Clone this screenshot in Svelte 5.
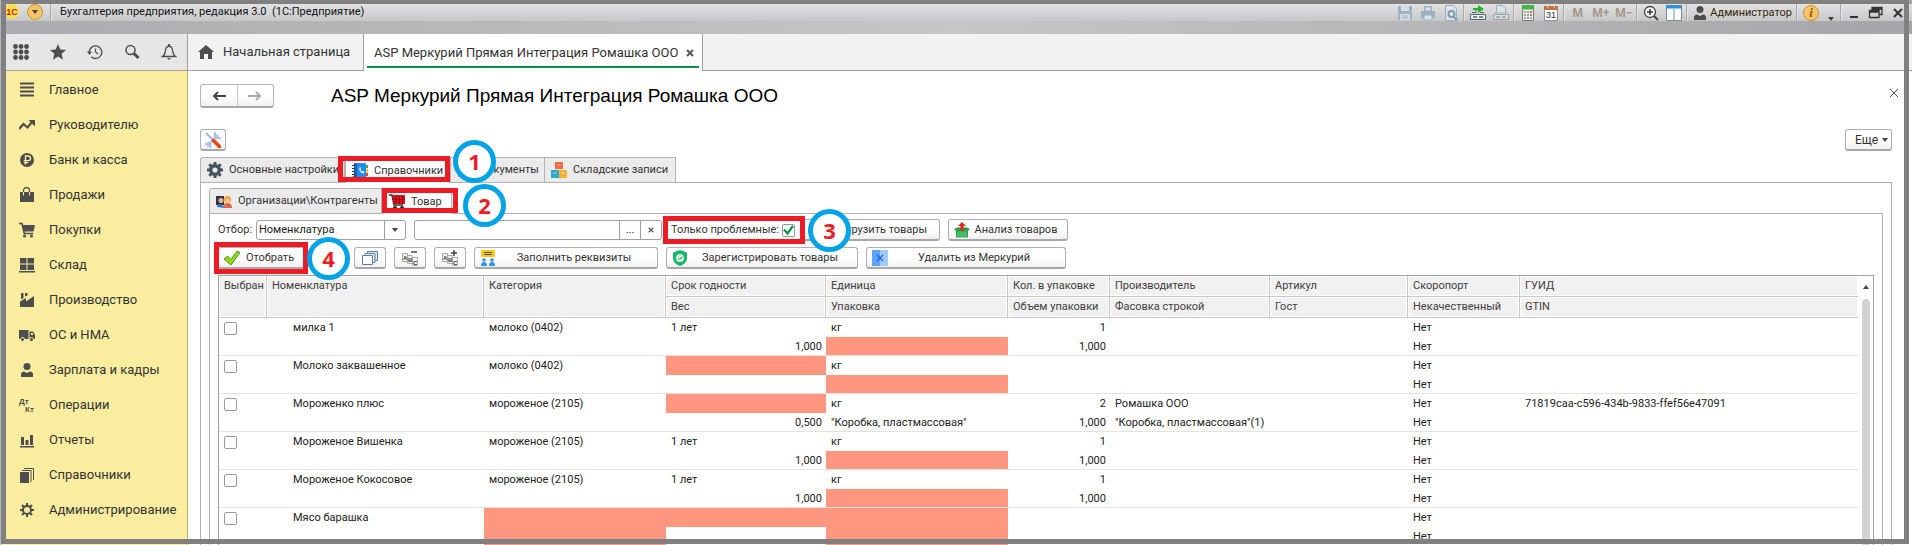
<script lang="ts">
	type Cell = string | null;

	interface Item {
		name: string;
		category: Cell;
		shelfLife: Cell;
		weight: string;
		unit: Cell;
		pack: Cell;
		count: string;
		volume: string;
		maker?: string;
		packing?: string;
		guid?: string;
	}

	const sections = [
		{ icon: 'menu', label: 'Главное' },
		{ icon: 'trend', label: 'Руководителю' },
		{ icon: 'ruble', label: 'Банк и касса' },
		{ icon: 'bag', label: 'Продажи' },
		{ icon: 'cart', label: 'Покупки' },
		{ icon: 'blocks', label: 'Склад' },
		{ icon: 'factory', label: 'Производство' },
		{ icon: 'truck', label: 'ОС и НМА' },
		{ icon: 'person', label: 'Зарплата и кадры' },
		{ icon: 'dtkt', label: 'Операции' },
		{ icon: 'chart', label: 'Отчеты' },
		{ icon: 'books', label: 'Справочники' },
		{ icon: 'gear', label: 'Администрирование' }
	];

	// null marks a required value that is not filled in
	const items: Item[] = [
		{ name: 'милка 1', category: 'молоко (0402)', shelfLife: '1 лет', weight: '1,000', unit: 'кг', pack: null, count: '1', volume: '1,000' },
		{ name: 'Молоко заквашенное', category: 'молоко (0402)', shelfLife: null, weight: '', unit: 'кг', pack: null, count: '', volume: '' },
		{
			name: 'Мороженко плюс',
			category: 'мороженое (2105)',
			shelfLife: null,
			weight: '0,500',
			unit: 'кг',
			pack: '"Коробка, пластмассовая"',
			count: '2',
			volume: '1,000',
			maker: 'Ромашка ООО',
			packing: '"Коробка, пластмассовая"(1)',
			guid: '71819caa-c596-434b-9833-ffef56e47091'
		},
		{ name: 'Мороженое Вишенка', category: 'мороженое (2105)', shelfLife: '1 лет', weight: '1,000', unit: 'кг', pack: null, count: '1', volume: '1,000' },
		{ name: 'Мороженое Кокосовое', category: 'мороженое (2105)', shelfLife: '1 лет', weight: '1,000', unit: 'кг', pack: null, count: '1', volume: '1,000' },
		{ name: 'Мясо барашка', category: null, shelfLife: null, weight: '', unit: null, pack: null, count: '', volume: '' }
	];

	let onlyProblem = $state(true);
	let filterBy = $state('Номенклатура');
	let filterValue = $state('');
</script>

{#snippet icon(name: string)}
	<svg class="icon" viewBox="0 0 16 16" width="16" height="16" aria-hidden="true">
		{#if name === 'menu'}
			<path d="M1 1.500h14M1 5.500h14M1 9.500h14M1 13.500h14" stroke="#4d4d4d" stroke-width="2" />
		{:else if name === 'trend'}
			<path d="M0 12l4.500-5 4 3.500L13 5" fill="none" stroke="#4d4d4d" stroke-width="2.200" />
			<path d="M9.500 3H16v6.500z" fill="#4d4d4d" />
		{:else if name === 'ruble'}
			<circle cx="8" cy="8" r="7" fill="#4d4d4d" />
			<path d="M6.500 12.500V4h2.700a2.300 2.300 0 0 1 0 4.600H4.800M4.800 10.600h4.400" fill="none" stroke="#faeda0" stroke-width="1.400" />
		{:else if name === 'bag'}
			<path d="M1 5h14v10H1z" fill="#4d4d4d" />
			<path d="M4.500 8V3.500a3 3 0 0 1 6 0V8" fill="none" stroke="#4d4d4d" stroke-width="1.300" />
			<path d="M4.500 5v3.500M10.500 5v3.500" stroke="#faeda0" stroke-width="1" />
		{:else if name === 'cart'}
			<path d="M0 1.500h3l2.300 10h9" fill="none" stroke="#4d4d4d" stroke-width="1.600" />
			<path d="M3.500 3H16l-1.500 6.500H5z" fill="#4d4d4d" />
			<circle cx="5.500" cy="14" r="1.500" fill="#4d4d4d" /><circle cx="12.500" cy="14" r="1.500" fill="#4d4d4d" />
		{:else if name === 'blocks'}
			<path d="M1 1h6.500v5.500H1zM8.500 1H15v5.500H8.500zM1 7.500h6.500V13H1zM8.500 7.500H15V13H8.500zM0 14h16v1.500H0z" fill="#4d4d4d" />
		{:else if name === 'factory'}
			<path d="M1 15V9.500L7 6v3.500L15 4v11zM2 1h2.500v5L2 7.500zM6 1h2.500v2.500L6 4.500z" fill="#4d4d4d" />
		{:else if name === 'truck'}
			<path d="M0 3h9.500v9H0zM10.500 4.500h3.500L16 8v4h-5.500z" fill="#4d4d4d" />
			<path d="M12 6h1.500l1 2H12z" fill="#faeda0" />
			<circle cx="3.500" cy="12.500" r="2" fill="#4d4d4d" stroke="#faeda0" /><circle cx="12.500" cy="12.500" r="2" fill="#4d4d4d" stroke="#faeda0" />
		{:else if name === 'person'}
			<circle cx="8" cy="4.500" r="3.500" fill="#4d4d4d" />
			<path d="M2 15v-3q0-2 3-2.500l3 1.500 3-1.500q3 .5 3 2.500v3z" fill="#4d4d4d" />
		{:else if name === 'dtkt'}
			<text x="0" y="7" class="mini">Дт</text>
			<text x="6" y="15" class="mini">Кт</text>
		{:else if name === 'chart'}
			<path d="M1 14h14v1.500H1zM2 5h3v8H2zM6.500 8h3v5h-3zM11 3h3v10h-3z" fill="#4d4d4d" />
		{:else if name === 'books'}
			<path d="M1 5h9v11H1z" fill="#4d4d4d" />
			<path d="M3 3.500h9V15M5 1.500h9.500V13" fill="none" stroke="#4d4d4d" />
		{:else if name === 'gear'}
			<circle cx="8" cy="8" r="4" fill="none" stroke="#4d4d4d" stroke-width="2" />
			<path d="M8 1v3M8 12v3M1 8h3M12 8h3M3 3l2 2M11 11l2 2M3 13l2-2M11 5l2-2" stroke="#4d4d4d" stroke-width="2" />
		{:else if name === 'grid'}
			<g fill="#4d4d4d">
				{#each [2.5, 8, 13.5] as x}
					{#each [2.5, 8, 13.5] as y}<circle cx={x} cy={y} r="2.400" />{/each}
				{/each}
			</g>
		{:else if name === 'star'}
			<path d="M8 0l2.300 5.600 5.700.4-4.400 3.800 1.400 6L8 12.500 3 15.800l1.400-6L0 6l5.700-.4z" fill="#4d4d4d" />
		{:else if name === 'history'}
			<path d="M2.200 8a6.300 6.300 0 1 1 2 4.800" fill="none" stroke="#4d4d4d" stroke-width="1.300" />
			<path d="M0 7.500h5L2.500 11z" fill="#4d4d4d" />
			<path d="M8.500 4.500V8l2.500 2" fill="none" stroke="#4d4d4d" stroke-width="1.200" />
		{:else if name === 'search'}
			<circle cx="6.500" cy="6" r="4.500" fill="none" stroke="#4d4d4d" stroke-width="1.500" />
			<path d="M10 9.500l4.500 4.500" stroke="#4d4d4d" stroke-width="3" />
		{:else if name === 'bell'}
			<path d="M1.500 12.500C4 11 4 9 4.500 6c.8-5 6.200-5 7 0 .5 3 .5 5 3 6.500z" fill="none" stroke="#4d4d4d" stroke-width="1.300" />
			<path d="M6 14h4l-2 2zM7 0h2v2H7z" fill="#4d4d4d" />
		{:else if name === 'home'}
			<path d="M8 1l8 7h-2v7h-4v-5H6v5H2V8H0z" fill="#4d4d4d" />
		{:else if name === 'tools'}
			<path d="M2 14L13 3" stroke="#a9c4e8" stroke-width="2.500" />
			<path d="M10 0v4.500L12 6h4M0 12l4-1 1.500 1.500L5 16" fill="none" stroke="#a9c4e8" stroke-width="2" />
			<path d="M1 1l8 8" stroke="#9db9dd" stroke-width="2" />
			<path d="M8.500 8.500l6 6" stroke="#f0440f" stroke-width="3.500" stroke-linecap="round" />
		{:else if name === 'cog'}
			<circle cx="8" cy="8" r="4.300" fill="none" stroke="#45525e" stroke-width="3.500" />
			<path d="M8 0v3M8 13v3M0 8h3M13 8h3M2.300 2.300l2 2M11.700 11.700l2 2M2.300 13.700l2-2M11.700 4.300l2-2" stroke="#45525e" stroke-width="3" />
		{:else if name === 'phonebook'}
			<path d="M13 2h3v3h-3z" fill="#2fb64f" /><path d="M13 6h3v3h-3z" fill="#f2c22b" /><path d="M13 10h3v3h-3z" fill="#e5442c" />
			<rect x="2" y="0" width="12" height="16" rx="1" fill="#1f8df0" /><path d="M2 0h3v16H2z" fill="#1565b8" />
			<path d="M0 2.500h3M0 5.500h3M0 8.500h3M0 11.500h3M0 14h3" stroke="#333" />
			<path d="M7 5q0 5 5 5.500l.500-2-2-.8-.8.600Q8.500 7.500 8.700 6.500l.6-.6L8.500 4z" fill="#cfe6fd" />
		{:else if name === 'doc'}
			<path d="M1 1h12v14H1z" fill="#c98b6c" />
		{:else if name === 'boxes'}
			<path d="M4 0h8v7H4z" fill="#f26a3d" /><path d="M0 8h8v8H0z" fill="#2ba6cf" /><path d="M8 8h8v8H8z" fill="#f5b331" />
			<path d="M6.500 3h3M2.500 11h3M10.500 11h3" stroke="#fff" stroke-opacity=".6" />
		{:else if name === 'people'}
			<path d="M0 3h8v9H0z" fill="#2c3648" /><circle cx="5" cy="7.500" r="2.500" fill="#f0b58a" />
			<circle cx="11.500" cy="6.500" r="3.500" fill="#f1a83c" /><circle cx="11.500" cy="8" r="2" fill="#f6cfa6" />
			<path d="M7 15q0-5 4.500-5T16 15z" fill="#e06a4e" /><path d="M1 14q0-3 4-3l4 4z" fill="#3b79c5" />
		{:else if name === 'redcart'}
			<path d="M0 1h3l2 10h9" fill="none" stroke="#333" stroke-width="1.500" />
			<path d="M3 1h13v9H5z" fill="#d8131a" /><path d="M7 2v8M10.500 2v8M13.500 2v8M4 5.500h12" stroke="#8f0b10" stroke-width=".8" />
			<circle cx="6" cy="14" r="2" fill="#222" /><circle cx="13" cy="14" r="2" fill="#222" />
		{:else if name === 'check'}
			<path d="M0 9l3.500-3L7 9.500 13 1l3 1.500L7 15z" fill="#8ede13" stroke="#3f8a12" stroke-width=".9" />
		{:else if name === 'windows'}
			<path d="M5.500 1.500h10v9h-10z" fill="#dce8f2" stroke="#5d7d9c" /><path d="M3 3.500h10v9H3z" fill="#e8f0f7" stroke="#5d7d9c" />
			<path d="M.5 5.500h10v9H.5z" fill="#fff" stroke="#5d7d9c" />
		{:else if name === 'abcminus' || name === 'abcplus'}
			<path d="M.5 3.500h5v8h-5zM5.500 5.500h5v8h-5zM10.500 7.500h5v8h-5z" fill="#f4f4f4" stroke="#aaa" />
			<text x="1" y="10" class="abc">A</text><text x="6" y="12" class="abc">B</text><text x="11" y="14.500" class="abc">C</text>
			<path d={name === 'abcplus' ? 'M9 3h6M12 0v6' : 'M9 2h6'} stroke="#444" stroke-width="1.500" />
		{:else if name === 'sign'}
			<path d="M1 0h14v7H1z" fill="#fbc81d" /><path d="M4 2.500h8M4 4.500h8" stroke="#5a4a1a" />
			<circle cx="4" cy="10" r="1.800" fill="#2f8fe0" /><circle cx="12" cy="10" r="1.800" fill="#2f8fe0" />
			<path d="M1 16q0-4 3-4t3 4zM9 16q0-4 3-4t3 4z" fill="#2f8fe0" />
		{:else if name === 'shield'}
			<path d="M8 0l7 2.500V8q0 5-7 8-7-3-7-8V2.500z" fill="#12b76a" /><circle cx="8" cy="8" r="4" fill="#d9f5e7" />
			<path d="M6 8l1.500 1.500L10.500 6.500" fill="none" stroke="#12925a" />
		{:else if name === 'delete'}
			<path d="M0 0h8v16H0z" fill="#5aa2fb" /><path d="M8 0h8v16H8z" fill="#9ecafc" />
			<path d="M5 5l6 6M11 5l-6 6" stroke="#2a5fe0" stroke-width="1.300" />
		{:else if name === 'upbox'}
			<path d="M0 7l3-1.500h10L16 7l-2 2v6.500H2V9z" fill="#2f9e4c" /><path d="M3 9.500h10V15H3z" fill="#43bd62" />
			<path d="M8 0l4 4h-2.500v5h-3V4H4z" fill="#e02420" />
		{:else if name === 'save'}
			<path d="M1 1h14v14H1z" fill="#9db1c1" /><path d="M4 1h8v5H4zM3 9h10v6H3z" fill="#d7dde2" /><path d="M4.500 11h7M4.500 13h7" stroke="#9db1c1" />
		{:else if name === 'print'}
			<path d="M4 1h8v5h3v7H1V6h3z" fill="#9db1c1" /><path d="M5 2h6v4H5zM4 10h8v5H4z" fill="#dde2e6" stroke="#9db1c1" />
		{:else if name === 'preview'}
			<path d="M2.500.500h8l3 3v12h-11z" fill="#dde2e6" stroke="#9db1c1" /><circle cx="8.500" cy="9" r="3" fill="none" stroke="#7f9ab0" stroke-width="2" />
			<path d="M10.500 11.500L14 15" stroke="#7f9ab0" stroke-width="2" />
		{:else if name === 'link' || name === 'linkoff'}
			<g opacity={name === 'linkoff' ? 0.4 : 1}>
				<path d="M2 7.500h4v-3M14 7.500h-4" fill="none" stroke="#55636e" />
				<path d="M.500 9.500h15v5H.500z" fill="#eef2f4" stroke="#55636e" /><path d="M3 12h4M9 12h4" stroke="#55636e" stroke-width="1.500" />
			</g>
			{#if name === 'link'}
				<path d="M3 3h5V0l6 4-6 4V5H3z" fill="#22b422" />
			{:else}
				<path d="M3.500 8V.500h6l3 3V8z" fill="#dde2e6" stroke="#9db1c1" />
			{/if}
		{:else if name === 'calc'}
			<path d="M2.500.500h11v15h-11z" fill="#f4f4f4" stroke="#777" /><path d="M2 0h12v4.500H2z" fill="#41b843" />
			<path d="M4 7h8M4 10h8M4 13h8" stroke="#888" stroke-dasharray="2 1" stroke-width="1.500" /><path d="M10 7h2M10 10h2" stroke="#d55" stroke-width="1.500" />
		{:else if name === 'calendar'}
			<path d="M1.500 1.500h13v14h-13z" fill="#fff" stroke="#8795a5" /><path d="M1 1h14v4H1z" fill="#bd7346" />
			<path d="M4.500 0v3M11.500 0v3" stroke="#e5c5ae" /><text x="3" y="13" class="day">31</text>
		{:else if name === 'zoom'}
			<circle cx="7" cy="7" r="5.500" fill="#f7f7f7" stroke="#444" stroke-width="1.300" /><path d="M4 7h6M7 4v6" stroke="#333" stroke-width="1.500" />
			<path d="M11 11l4 4" stroke="#444" stroke-width="2" />
		{:else if name === 'panels'}
			<path d="M.500 1.500h15v14H.500z" fill="#fff" stroke="#7d8a96" /><path d="M0 0h16v3.500H0z" fill="#3390dd" /><path d="M8 4v11" stroke="#7d8a96" />
		{:else if name === 'restore'}
			<path d="M4 5V2.500h10v7h-3M1.500 5.500h9.500v7H1.500zM1.500 7h9.500M4 4h10" fill="none" stroke="#333" stroke-width="1.300" />
		{/if}
	</svg>
{/snippet}

{#snippet caret()}
	<svg class="caret" viewBox="0 0 6 4" width="6" height="4" aria-hidden="true"><path d="M0 0h6L3 4z" fill="#444" /></svg>
{/snippet}

{#snippet callout(step: number)}
	<span class="outline"></span>
	<span class="step">{step}</span>
{/snippet}

<div class="window">
	<header class="titlebar">
		<span class="logo">1С</span>
		<button class="round" aria-label="Главное меню">{@render caret()}</button>
		<span class="sep"></span>
		<span class="caption">Бухгалтерия предприятия, редакция 3.0&nbsp; (1С:Предприятие)</span>
		<div class="system">
			<button aria-label="Сохранить">{@render icon('save')}</button>
			<button aria-label="Печать">{@render icon('print')}</button>
			<button aria-label="Просмотр">{@render icon('preview')}</button>
			<span class="sep"></span>
			<button aria-label="Перейти по ссылке">{@render icon('link')}</button>
			<button aria-label="Получить ссылку">{@render icon('linkoff')}</button>
			<span class="sep"></span>
			<button aria-label="Калькулятор">{@render icon('calc')}</button>
			<button aria-label="Календарь">{@render icon('calendar')}</button>
			<span class="sep"></span>
			<button class="memory">M</button>
			<button class="memory">M+</button>
			<button class="memory">M−</button>
			<span class="sep"></span>
			<button aria-label="Масштаб">{@render icon('zoom')}</button>
			<button aria-label="Панели">{@render icon('panels')}</button>
			<span class="sep"></span>
			<button class="user">{@render icon('person')}Администратор</button>
			<span class="sep"></span>
			<button class="round info" aria-label="О программе">i</button>
			<button class="narrow" aria-label="Дополнительно">{@render caret()}</button>
			<span class="sep"></span>
			<button class="winbtn" aria-label="Свернуть">
				<svg viewBox="0 0 12 12" width="12" height="12"><path d="M2 10h8" stroke="#333" stroke-width="2" /></svg>
			</button>
			<button class="winbtn" aria-label="Развернуть">{@render icon('restore')}</button>
			<button class="winbtn" aria-label="Закрыть">
				<svg viewBox="0 0 12 12" width="12" height="12"><path d="M2 2l8 8M10 2l-8 8" stroke="#333" stroke-width="2" /></svg>
			</button>
		</div>
	</header>

	<div class="topbar">
		<div class="tools">
			<button aria-label="Меню функций">{@render icon('grid')}</button>
			<button aria-label="Избранное">{@render icon('star')}</button>
			<button aria-label="История">{@render icon('history')}</button>
			<button aria-label="Поиск">{@render icon('search')}</button>
			<button aria-label="Оповещения">{@render icon('bell')}</button>
		</div>
		<a class="page-tab home" href="#home">{@render icon('home')}Начальная страница</a>
		<a class="page-tab current" href="#mercury">
			<span>ASP Меркурий Прямая Интеграция Ромашка ООО</span>
			<svg viewBox="0 0 8 8" width="8" height="8" aria-hidden="true"><path d="M1 1l6 6M7 1L1 7" stroke="#555" stroke-width="2" /></svg>
		</a>
	</div>

	<div class="body">
		<nav class="sidebar">
			{#each sections as section}
				<a href="#{section.icon}">{@render icon(section.icon)}{section.label}</a>
			{/each}
		</nav>

		<main class="page">
			<div class="head">
				<div class="history">
					<button aria-label="Назад">
						<svg viewBox="0 0 14 10" width="14" height="10"><path d="M14 5H3M6 1L2 5l4 4" fill="none" stroke="#444" stroke-width="2" /></svg>
					</button>
					<button aria-label="Вперед">
						<svg viewBox="0 0 14 10" width="14" height="10"><path d="M0 5h11M8 1l4 4-4 4" fill="none" stroke="#aaa" stroke-width="2" /></svg>
					</button>
				</div>
				<h1>ASP Меркурий Прямая Интеграция Ромашка ООО</h1>
				<button class="close" aria-label="Закрыть страницу">
					<svg viewBox="0 0 8 8" width="8" height="8"><path d="M0 0l8 8M8 0L0 8" stroke="#555" /></svg>
				</button>
			</div>

			<div class="commands">
				<button class="btn square" aria-label="Настройка">{@render icon('tools')}</button>
				<button class="btn more">Еще {@render caret()}</button>
			</div>

			<div class="tabs outer">
				<button class="tab settings">{@render icon('cog')}Основные настройки</button>
				<div class="marked first">
					<button class="tab active">{@render icon('phonebook')}Справочники</button>
					{@render callout(1)}
				</div>
				<button class="tab docs">{@render icon('doc')}Документы</button>
				<button class="tab stock">{@render icon('boxes')}Складские записи</button>
			</div>

			<section class="panel">
				<div class="tabs inner">
					<button class="tab orgs">{@render icon('people')}Организации\Контрагенты</button>
					<div class="marked second">
						<button class="tab active">{@render icon('redcart')}Товар</button>
						{@render callout(2)}
					</div>
				</div>

				<section class="panel content">
					<div class="row">
						<label class="by" for="filter">Отбор:</label>
						<div class="field combo">
							<select id="filter" bind:value={filterBy}>
								<option>Номенклатура</option>
								<option>Категория</option>
							</select>
							<span class="drop">{@render caret()}</span>
						</div>
						<div class="field value">
							<input type="text" aria-label="Значение отбора" bind:value={filterValue} />
							<button aria-label="Выбрать">...</button>
							<button aria-label="Очистить" onclick={() => (filterValue = '')}>
								<svg viewBox="0 0 8 8" width="6" height="6"><path d="M1 1l6 6M7 1L1 7" stroke="#555" stroke-width="1.500" /></svg>
							</button>
						</div>
						<div class="marked third">
							<label class="only">Только проблемные: <input type="checkbox" bind:checked={onlyProblem} /></label>
							{@render callout(3)}
						</div>
						<button class="btn upload">Выгрузить товары</button>
						<button class="btn analyse">{@render icon('upbox')}<span>Анализ товаров</span></button>
					</div>

					<div class="row">
						<div class="marked fourth">
							<button class="btn pick">{@render icon('check')}<span>Отобрать</span></button>
							{@render callout(4)}
						</div>
						<button class="btn tool" aria-label="Отметить все">{@render icon('check')}</button>
						<button class="btn tool" aria-label="Копировать">{@render icon('windows')}</button>
						<button class="btn tool" aria-label="Свернуть группы">{@render icon('abcminus')}</button>
						<button class="btn tool" aria-label="Развернуть группы">{@render icon('abcplus')}</button>
						<button class="btn fill">{@render icon('sign')}<span>Заполнить реквизиты</span></button>
						<button class="btn register">{@render icon('shield')}<span>Зарегистрировать товары</span></button>
						<button class="btn remove">{@render icon('delete')}<span>Удалить из Меркурий</span></button>
					</div>

					<div class="grid">
						<table>
							<colgroup>
								<col class="c-pick" /><col class="c-name" /><col class="c-category" /><col class="c-shelf" />
								<col class="c-unit" /><col class="c-count" /><col class="c-maker" /><col class="c-article" />
								<col class="c-flag" /><col />
							</colgroup>
							<thead>
								<tr>
									<th rowspan="2">Выбран</th>
									<th rowspan="2">Номенклатура</th>
									<th rowspan="2">Категория</th>
									<th>Срок годности</th>
									<th>Единица</th>
									<th>Кол. в упаковке</th>
									<th>Производитель</th>
									<th>Артикул</th>
									<th>Скоропорт</th>
									<th>ГУИД</th>
								</tr>
								<tr>
									<th>Вес</th>
									<th>Упаковка</th>
									<th>Объем упаковки</th>
									<th>Фасовка строкой</th>
									<th>Гост</th>
									<th>Некачественный</th>
									<th>GTIN</th>
								</tr>
							</thead>
							{#each items as item}
								<tbody>
									<tr>
										<td rowspan="2" class="last"><input type="checkbox" aria-label={item.name} /></td>
										<td rowspan="2" class="last name">{item.name}</td>
										<td rowspan="2" class="last" class:missing={item.category === null}>{item.category ?? ''}</td>
										<td class:missing={item.shelfLife === null}>{item.shelfLife ?? ''}</td>
										<td class:missing={item.unit === null}>{item.unit ?? ''}</td>
										<td class="num">{item.count}</td>
										<td>{item.maker ?? ''}</td>
										<td></td>
										<td>Нет</td>
										<td>{item.guid ?? ''}</td>
									</tr>
									<tr>
										<td class="last num">{item.weight}</td>
										<td class="last" class:missing={item.pack === null}>{item.pack ?? ''}</td>
										<td class="last num">{item.volume}</td>
										<td class="last">{item.packing ?? ''}</td>
										<td class="last"></td>
										<td class="last">Нет</td>
										<td class="last"></td>
									</tr>
								</tbody>
							{/each}
						</table>
						<div class="scroll">
							<svg viewBox="0 0 6 4" width="6" height="4" aria-hidden="true"><path d="M0 4h6L3 0z" fill="#444" /></svg>
							<span class="thumb"></span>
						</div>
					</div>
				</section>
			</section>
		</main>
	</div>
	<div class="frame"></div>
</div>

<style>
	:global(body) {
		margin: 0;
	}

	.window {
		position: relative;
		display: flex;
		flex-direction: column;
		height: 100vh;
		overflow: hidden;
		box-sizing: border-box;
		border-left: 1px solid #b5b5bb;
		background: #fff;
		color: #222;
		font-family: Roboto, 'Liberation Sans', sans-serif;
		font-size: 11px;
		line-height: 16px;
	}

	/* thick grey outline drawn over the whole window */
	.frame {
		position: absolute;
		inset: -1px 3px 1px 0;
		border: 5px solid #808080;
		pointer-events: none;
	}

	button,
	select,
	input {
		margin: 0;
		padding: 0;
		border: 0;
		background: none;
		color: inherit;
		font: inherit;
	}

	a {
		color: inherit;
		text-decoration: none;
	}

	.icon,
	.caret {
		flex: none;
		display: block;
	}

	.mini {
		font: bold 8px 'Liberation Sans', sans-serif;
		fill: #4d4d4d;
	}

	.abc {
		font: bold 6px 'Liberation Sans', sans-serif;
		fill: #333;
	}

	.day {
		font: 9px 'Liberation Sans', sans-serif;
		fill: #333;
	}

	/* title bar */
	.titlebar {
		flex: none;
		display: flex;
		align-items: flex-start;
		box-sizing: border-box;
		height: 34px;
		padding: 4px 3px 0 4px;
		background:
			linear-gradient(#e2e2e3, #c6c7c8) 0 4px / 100% 17px no-repeat,
			linear-gradient(90deg, #acacb0, #c6c6c6 50%, #a6a6aa);
		color: #111;
	}

	.titlebar > *,
	.system > * {
		height: 17px;
	}

	.titlebar .logo {
		width: 14px;
		height: 15px;
		border-radius: 50%;
		background: #fbe04a;
		color: #d8121a;
		font: bold 9px 'Liberation Sans', sans-serif;
		line-height: 16px;
		text-align: center;
	}

	.titlebar .round {
		display: flex;
		align-items: center;
		justify-content: center;
		box-sizing: border-box;
		width: 16px;
		height: 16px;
		margin-left: 8px;
		border: 1px solid #c89336;
		border-radius: 50%;
		background: #f7c566;
	}

	.titlebar > .sep {
		margin-left: 7px;
	}

	.sep {
		width: 1px;
		background: #a9a9ab;
		border-right: 1px solid #e3e3e3;
	}

	.caption {
		margin-left: 8px;
	}

	.system {
		display: flex;
		align-items: center;
		margin-left: auto;
	}

	.system button {
		display: flex;
		align-items: center;
		justify-content: center;
		width: 23px;
	}

	.system .memory {
		color: #a69889;
		font-size: 12px;
		font-weight: bold;
	}

	.system .sep {
		margin: 0 1px;
	}

	.system .user {
		gap: 2px;
		width: auto;
		padding: 0 3px;
		color: #33260a;
	}

	.system .info {
		width: 16px;
		margin: 0 4px;
		color: #8a5a12;
		font-family: 'Liberation Serif', serif;
		font-size: 13px;
		font-style: italic;
		font-weight: bold;
	}

	.system .narrow {
		width: 16px;
		align-items: flex-end;
	}

	.system .winbtn {
		width: 22px;
	}

	/* section tools and page tabs */
	.topbar {
		flex: none;
		display: flex;
		box-sizing: border-box;
		height: 37px;
		border-bottom: 1px solid #a0a0a0;
		background: #f2f2f2;
		color: #333;
		font-size: 13px;
	}

	.tools {
		display: flex;
		align-items: center;
		gap: 21px;
		box-sizing: border-box;
		width: 187px;
		padding-left: 12px;
		border-right: 1px solid #a0a0a0;
		background: #e6e6e6;
	}

	.page-tab {
		display: flex;
		align-items: center;
		box-sizing: border-box;
		border-right: 1px solid #a0a0a0;
	}

	.page-tab.home {
		gap: 9px;
		width: 176px;
		padding-left: 10px;
	}

	.page-tab.current {
		justify-content: space-between;
		width: 339px;
		margin-bottom: -1px;
		padding: 0 8px 0 10px;
		background: linear-gradient(#009646, #009646) 3px 32px / 332px 2px no-repeat #fff;
	}

	.body {
		display: flex;
		flex: 1;
		min-height: 0;
	}

	.sidebar {
		flex: none;
		box-sizing: border-box;
		width: 187px;
		padding-top: 1px;
		border-right: 1px solid #c3b55f;
		background: #faeda0;
		color: #333;
		font-size: 13px;
	}

	.sidebar a {
		display: flex;
		align-items: center;
		gap: 14px;
		height: 35px;
		padding-left: 18px;
	}

	/* page */
	.page {
		flex: 1;
		min-width: 0;
		padding: 12px 20px 0 12px;
	}

	.head {
		display: flex;
		align-items: center;
		height: 26px;
	}

	.history {
		display: flex;
		box-sizing: border-box;
		width: 74px;
		height: 24px;
		border: 1px solid #b5b5b5;
		border-bottom: 2px solid #a8a8a8;
		border-radius: 3px;
		background: linear-gradient(#fff 50%, #f0f0f0);
	}

	.history button {
		flex: 1;
		display: flex;
		align-items: center;
		justify-content: center;
	}

	.history button + button {
		border-left: 1px solid #c8c8c8;
	}

	h1 {
		margin: 0 0 0 57px;
		color: #000;
		font: 19px 'Liberation Sans', Arial, sans-serif;
	}

	.close {
		display: flex;
		margin: 0 -6px 6px auto;
	}

	.commands {
		display: flex;
		justify-content: space-between;
		margin-top: 20px;
	}

	.btn {
		display: flex;
		align-items: center;
		box-sizing: border-box;
		height: 22px;
		padding: 0 5px;
		border: 1px solid #b0b0b0;
		border-bottom: 2px solid #a8a8a8;
		border-radius: 3px;
		background: linear-gradient(#fff 50%, #f0f0f0);
		color: #333;
		white-space: nowrap;
	}

	.btn span {
		flex: 1;
		text-align: center;
	}

	.btn.square {
		width: 26px;
		padding: 0 4px;
	}

	.btn.more {
		gap: 4px;
		width: 47px;
		padding-left: 9px;
		font-size: 12px;
	}

	.tabs {
		display: flex;
		height: 25px;
	}

	.tabs.outer {
		margin-top: 6px;
	}

	.tab {
		display: flex;
		align-items: center;
		gap: 6px;
		box-sizing: border-box;
		height: 25px;
		padding: 0 6px;
		border: 1px solid #b3b3b3;
		border-bottom: 0;
		background: #ebebeb;
		color: #333;
		white-space: nowrap;
	}

	.tab:first-child {
		border-radius: 3px 0 0 0;
	}

	.tab + .tab {
		border-left: 0;
	}

	.tab.active {
		width: 100%;
		height: 26px;
		background: #fff;
	}

	.settings {
		width: 145px;
	}

	.docs {
		width: 95px;
	}

	.stock {
		width: 131px;
	}

	.orgs {
		width: 173px;
	}

	.panel {
		padding: 5px 8px 8px;
		border: 1px solid #b3b3b3;
	}

	.row {
		display: flex;
		align-items: center;
		gap: 8px;
		height: 22px;
		margin-bottom: 6px;
	}

	.by {
		width: 30px;
		color: #333;
		white-space: nowrap;
	}

	.field {
		display: flex;
		box-sizing: border-box;
		height: 20px;
		border: 1px solid #a0a0a0;
		border-radius: 3px;
		background: #fff;
	}

	.combo {
		width: 150px;
	}

	.combo select {
		flex: 1;
		min-width: 0;
		padding-left: 2px;
		appearance: none;
		outline: 0;
	}

	.drop,
	.field button {
		display: flex;
		align-items: center;
		justify-content: center;
		width: 21px;
		box-sizing: border-box;
		border-left: 1px solid #a0a0a0;
	}

	.value {
		width: 248px;
		margin-right: 1px;
	}

	.value input {
		flex: 1;
		min-width: 0;
		outline: 0;
	}

	.only {
		display: flex;
		align-items: center;
		justify-content: space-between;
		width: 124px;
		color: #333;
		white-space: nowrap;
	}

	input[type='checkbox'] {
		display: block;
		box-sizing: border-box;
		width: 13px;
		height: 13px;
		border: 1px solid #999;
		border-radius: 2px;
		background: #fff;
		appearance: none;
	}

	.only input:checked {
		background: url("data:image/svg+xml,%3Csvg xmlns='http://www.w3.org/2000/svg' viewBox='0 0 11 11'%3E%3Cpath d='M1 4.500l3.500 4L10 1' fill='none' stroke='%23079447' stroke-width='2.200'/%3E%3C/svg%3E") #fff;
	}

	.upload {
		width: 138px;
		margin-left: -1px;
		justify-content: flex-end;
		padding-right: 12px;
	}

	.analyse {
		width: 120px;
	}

	.pick {
		width: 88px;
	}

	.btn.tool {
		width: 32px;
		justify-content: center;
	}

	.fill {
		width: 184px;
	}

	.register {
		width: 192px;
	}

	.remove {
		width: 200px;
	}

	/* numbered red highlights */
	.marked {
		position: relative;
	}

	.marked.first {
		width: 105px;
	}

	.marked.second {
		width: 70px;
	}

	.outline {
		position: absolute;
		z-index: 1;
		inset: -5px -2px -5px -4px;
		border: 5px solid #ed1c24;
		pointer-events: none;
	}

	.first .outline {
		inset: -1px 0 0 -7px;
	}

	.second .outline {
		inset: 0 -6px 0 0;
	}

	.third .outline {
		inset: -6px -10px -6px -8px;
	}

	.step {
		position: absolute;
		z-index: 2;
		top: 50%;
		left: calc(100% + 1px);
		box-sizing: border-box;
		width: 43px;
		height: 43px;
		margin-top: -21px;
		border: 5px solid #00a2e8;
		border-radius: 50%;
		background: #fff;
		color: #ed1c24;
		font: bold 22px 'Open Sans', 'Noto Sans', sans-serif;
		line-height: 32px;
		text-align: center;
	}

	.first .step {
		left: calc(100% + 3px);
		margin-top: -30px;
	}

	.second .step {
		left: calc(100% + 11px);
		margin-top: -17px;
	}

	.third .step {
		left: calc(100% + 13px);
	}

	/* goods table */
	.grid {
		display: flex;
		border: 1px solid #a0a0a0;
	}

	table {
		flex: 1;
		width: 100%;
		border-spacing: 0;
		table-layout: fixed;
	}

	.c-pick {
		width: 48px;
	}

	.c-name {
		width: 217px;
	}

	.c-category,
	.c-unit {
		width: 182px;
	}

	.c-shelf,
	.c-maker {
		width: 160px;
	}

	.c-count {
		width: 102px;
	}

	.c-article {
		width: 138px;
	}

	.c-flag {
		width: 112px;
	}

	th,
	td {
		box-sizing: border-box;
		padding: 2px 4px 0 5px;
		overflow: hidden;
		text-align: left;
		vertical-align: top;
		white-space: nowrap;
	}

	th {
		height: 21px;
		border-right: 1px solid #c8c8c8;
		border-bottom: 1px solid #c8c8c8;
		background: #f1f1f1;
		box-shadow: inset 0 0 0 1px #fff;
		color: #404040;
		font-weight: normal;
	}

	th:last-child {
		border-right: 0;
	}

	td {
		height: 19px;
	}

	td.last {
		border-bottom: 1px solid #e3e3e3;
	}

	td.name {
		padding-left: 26px;
	}

	td.num {
		text-align: right;
	}

	td.missing {
		background: #ff9780;
	}

	td input[type='checkbox'] {
		margin-top: 2px;
	}

	.scroll {
		flex: none;
		display: flex;
		flex-direction: column;
		align-items: center;
		gap: 10px;
		width: 15px;
		padding-top: 9px;
	}

	.thumb {
		flex: 1;
		width: 8px;
		border-radius: 4px;
		background: #d3d3d3;
	}
</style>
